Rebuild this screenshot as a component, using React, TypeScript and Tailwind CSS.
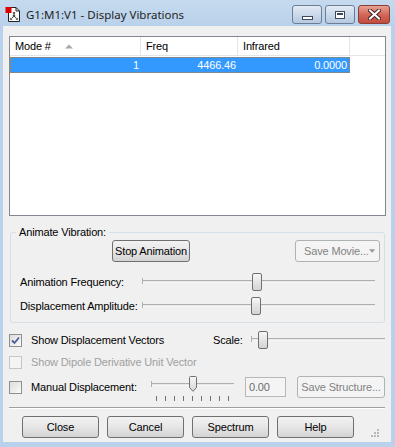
import React from "react";

// Win7-style "Display Vibrations" dialog

function Check({ checked, disabled }: { checked?: boolean; disabled?: boolean }) {
  return (
    <span
      className={`flex h-[13px] w-[13px] shrink-0 items-center justify-center border ${
        disabled ? "border-[#c6c6c6] bg-[#f4f4f4]" : "border-[#8e8f8f] bg-gradient-to-br from-[#dcdcdc] to-[#fbfbfb]"
      }`}
    >
      {checked && (
        <svg width="9" height="9" viewBox="0 0 9 9">
          <path d="M1 4.5 L3.5 7 L8 1.5" fill="none" stroke="#4a5f97" strokeWidth="1.8" />
        </svg>
      )}
    </span>
  );
}

function Track({ className, thumb, pointed }: { className: string; thumb: string; pointed?: boolean }) {
  return (
    <div className={`relative h-[18px] shrink-0 ${className}`}>
      <div className="absolute left-0 right-0 top-[7px] h-[3px] border-t border-[#b0b0b0] bg-[#e7e7e7] border-b border-b-[#f7f7f7]" />
      <div className="absolute left-0 top-[5px] h-[6px] w-px bg-[#b0b0b0]" />
      {pointed ? (
        <svg className={`absolute top-0 ${thumb}`} width="8" height="16" viewBox="0 0 8 16">
          <defs>
            <linearGradient id="pt" x1="0" y1="0" x2="0" y2="1">
              <stop offset="0" stopColor="#f6f6f6" />
              <stop offset="1" stopColor="#d6d6d6" />
            </linearGradient>
          </defs>
          <path d="M0.5 1.5 Q0.5 0.5 1.5 0.5 H6.5 Q7.5 0.5 7.5 1.5 V11.5 L4 15.3 L0.5 11.5 Z" fill="url(#pt)" stroke="#707070" />
        </svg>
      ) : (
        <div
          className={`absolute top-0 h-[18px] w-[10px] rounded-[2px] border border-[#707070] bg-gradient-to-b from-[#f6f6f6] to-[#d4d4d4] ${thumb}`}
        />
      )}
    </div>
  );
}

function Btn({ children, className, disabled }: { children: React.ReactNode; className: string; disabled?: boolean }) {
  return (
    <div
      className={`flex h-[22px] shrink-0 items-center justify-center whitespace-nowrap rounded-[3px] border ${
        disabled
          ? "border-[#adb2b5] bg-[#f4f4f4] text-[#838383]"
          : "border-[#707070] bg-gradient-to-b from-[#f2f2f2] via-[#e6e6e6] to-[#d3d3d3] text-black"
      } ${className}`}
    >
      {children}
    </div>
  );
}

function TitleIcon() {
  return (
    <svg width="17" height="17" viewBox="0 0 17 17">
      <path d="M3.5 1.5 H11 L14.5 5 V15.5 H3.5 Z" fill="#fff" stroke="#222" />
      <path d="M11 1.5 V5 H14.5" fill="none" stroke="#222" />
      <rect x="0.5" y="1" width="6" height="6" fill="#e00000" />
      <g stroke="#555" strokeWidth="1">
        <path d="M9 7 L9 10 L6 13 M9 10 L12 13" fill="none" />
      </g>
      <circle cx="9" cy="7" r="1.3" fill="#666" />
      <circle cx="9" cy="10" r="1.3" fill="#444" />
      <circle cx="6" cy="13" r="1.3" fill="#777" />
      <circle cx="12" cy="13" r="1.3" fill="#777" />
    </svg>
  );
}

export default function App() {
  return (
    <div className="flex h-[447px] w-[395px] flex-col whitespace-nowrap bg-[#b9d1ea] font-['Liberation_Sans',Arial,sans-serif] text-[11px] leading-[13px] tracking-[-0.15px] text-black">
      {/* title bar */}
      <div className="flex h-[26px] items-start bg-gradient-to-b from-[#c6daee] to-[#b9d1ea]">
        <div className="ml-[5px] mt-[6px]">
          <TitleIcon />
        </div>
        <div className="ml-[4px] mt-[7px] font-['Noto_Sans',sans-serif] text-[11.5px] leading-[16px] tracking-normal text-[#1e1e1e]">
          G1:M1:V1 - Display Vibrations
        </div>
        <div className="ml-auto mr-[5px] mt-[5px] flex gap-[3px]">
          <div className="flex h-[19px] w-[30px] items-center justify-center rounded-[3px] border border-[#6d7d95] bg-gradient-to-b from-[#e3ebf5] via-[#cbd9ea] to-[#b7c9e0]">
            <div className="mt-[6px] h-[4px] w-[11px] border border-[#3d4a5e] bg-white" />
          </div>
          <div className="flex h-[19px] w-[30px] items-center justify-center rounded-[3px] border border-[#6d7d95] bg-gradient-to-b from-[#e3ebf5] via-[#cbd9ea] to-[#b7c9e0]">
            <div className="h-[8px] w-[10px] border border-[#3d4a5e] bg-white p-[1px]">
              <div className="h-full w-full border-t-2 border-[#3d4a5e]" />
            </div>
          </div>
          <div className="flex h-[19px] w-[32px] items-center justify-center rounded-[3px] border border-[#8c3c33] bg-gradient-to-b from-[#e6a293] via-[#d2685a] to-[#c24b3c]">
            <svg width="13" height="11" viewBox="0 0 13 11">
              <path d="M2 1.5 L11 9.5 M11 1.5 L2 9.5" stroke="#4a2222" strokeWidth="4" strokeLinecap="square" />
              <path d="M2 1.5 L11 9.5 M11 1.5 L2 9.5" stroke="#fff" strokeWidth="2" strokeLinecap="square" />
            </svg>
          </div>
        </div>
      </div>

      {/* client area */}
      <div className="mx-[4px] ml-[3px] mb-[5px] flex flex-1 flex-col bg-[#f0f0f0] pl-[6px] pr-[5px]">
        {/* list view */}
        <div className="mt-[10px] h-[180px] border border-[#828790] bg-white">
          <div className="flex h-[19px] border-b border-[#e5e5e5]">
            <div className="flex w-[131px] items-center border-r border-[#e5e5e5] pl-[5px]">
              <span>Mode #</span>
              <svg className="ml-[14px]" width="8" height="5" viewBox="0 0 8 5">
                <path d="M0 4.5 L4 0.5 L8 4.5 Z" fill="#a8a8a8" />
              </svg>
            </div>
            <div className="flex w-[97px] items-center border-r border-[#e5e5e5] pl-[5px]">Freq</div>
            <div className="flex w-[112px] items-center border-r border-[#e5e5e5] pl-[5px]">Infrared</div>
          </div>
          <div className="mt-[1px] flex h-[16px] w-[340px] items-center border border-dotted border-[#c87a2c] bg-[#3399ff] text-white">
            <div className="w-[130px] pr-[2px] text-right">1</div>
            <div className="w-[97px] pr-[2px] text-right">4466.46</div>
            <div className="w-[111px] pr-[2px] text-right">0.0000</div>
          </div>
        </div>

        {/* animate group */}
        <fieldset className="ml-[1px] mt-[9px] w-[375px] rounded-[3px] border border-[#d5dfe5] pb-[7px]">
          <legend className="ml-[5px] px-[3px] leading-[14px]">Animate Vibration:</legend>
          <div className="mt-[1px] flex h-[22px]">
            <Btn className="ml-[101px] w-[78px]">Stop Animation</Btn>
            <Btn className="ml-auto mr-[4px] w-[85px] justify-between pl-[8px] pr-[4px]" disabled>
              <span>Save Movie...</span>
              <svg width="7" height="4" viewBox="0 0 7 4">
                <path d="M0 0 H7 L3.5 4 Z" fill="#9a9a9a" />
              </svg>
            </Btn>
          </div>
          <div className="mt-[11px] flex h-[18px] items-center">
            <span className="ml-[9px] w-[122px] shrink-0">Animation Frequency:</span>
            <Track className="w-[233px]" thumb="left-[110px]" />
          </div>
          <div className="mt-[6px] flex h-[18px] items-center">
            <span className="ml-[9px] w-[122px] shrink-0">Displacement Amplitude:</span>
            <Track className="w-[233px]" thumb="left-[109px]" />
          </div>
        </fieldset>

        {/* options */}
        <div className="mt-[8px] flex h-[18px] items-center">
          <Check checked />
          <span className="ml-[9px] w-[182px] shrink-0">Show Displacement Vectors</span>
          <span className="w-[38px] shrink-0">Scale:</span>
          <Track className="w-[134px]" thumb="left-[7px]" />
        </div>
        <div className="mt-[5px] flex h-[16px] items-center text-[#a0a0a0]">
          <Check disabled />
          <span className="ml-[9px]">Show Dipole Derivative Unit Vector</span>
        </div>
        <div className="mt-[6px] flex items-start">
          <div className="mt-[5px] flex w-[142px] shrink-0 items-center">
            <Check />
            <span className="ml-[9px]">Manual Displacement:</span>
          </div>
          <div className="flex flex-col">
            <Track className="w-[83px]" thumb="left-[38px]" pointed />
            <div className="ml-[5px] mt-[2px] flex gap-[8px]">
              {[0, 1, 2, 3, 4, 5, 6, 7, 8].map((i) => (
                <div key={i} className="h-[5px] w-px bg-[#707070]" />
              ))}
            </div>
          </div>
          <div className="ml-[11px] mt-[1px] flex h-[20px] w-[41px] shrink-0 items-center border border-[#b5b8bd] bg-[#f4f4f4] pl-[3px] text-[#6d6d6d]">
            0.00
          </div>
          <Btn className="ml-[11px] w-[88px]" disabled>
            Save Structure...
          </Btn>
        </div>

        {/* separator */}
        <div className="mt-[6px] h-[2px] w-[376px] border-t border-[#a0a0a0] border-b border-b-white" />

        {/* bottom buttons */}
        <div className="mt-[7px] flex">
          <Btn className="ml-[13px] w-[77px]">Close</Btn>
          <Btn className="ml-[8px] w-[77px]">Cancel</Btn>
          <Btn className="ml-[8px] w-[77px]">Spectrum</Btn>
          <Btn className="ml-[8px] w-[77px]">Help</Btn>
          <svg className="ml-[16px] mt-[12px]" width="10" height="10" viewBox="0 0 10 10">
            <g fill="#b9b9b9">
              <rect x="7" y="1" width="2" height="2" />
              <rect x="4" y="4" width="2" height="2" />
              <rect x="7" y="4" width="2" height="2" />
              <rect x="1" y="7" width="2" height="2" />
              <rect x="4" y="7" width="2" height="2" />
              <rect x="7" y="7" width="2" height="2" />
            </g>
          </svg>
        </div>
      </div>
    </div>
  );
}
